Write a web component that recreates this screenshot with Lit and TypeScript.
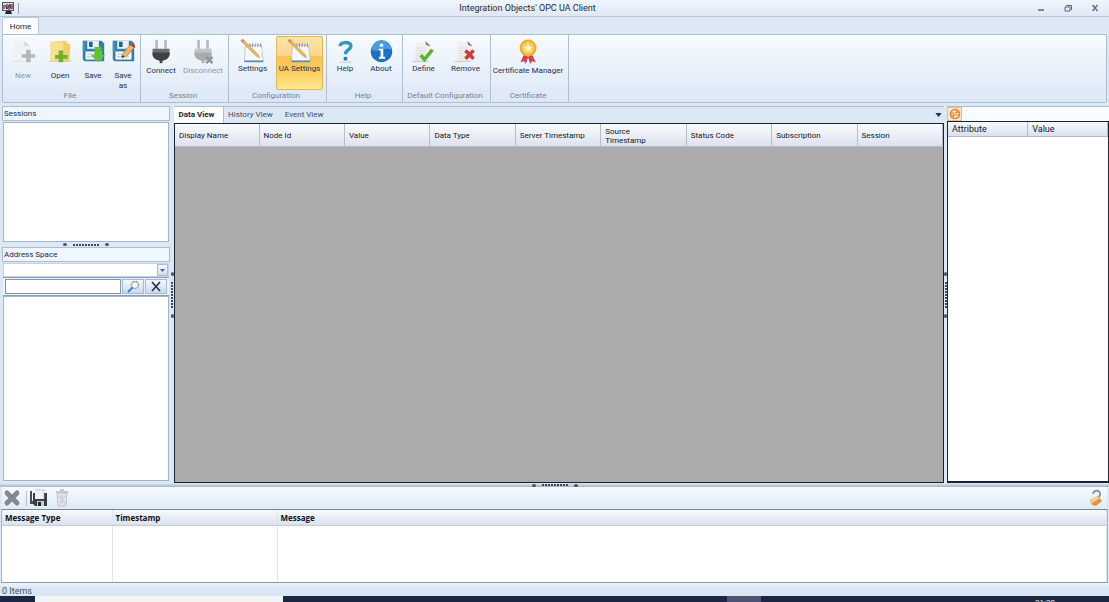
import { LitElement, html, css, svg, nothing } from "lit";
import { customElement, property } from "lit/decorators.js";
import { classMap } from "lit/directives/class-map.js";

const floppy = svg`
  <path d="M2 2h21l3 3v20H4l-2-2z" fill="#2f7fa8"/>
  <path d="M2 2h3v12H2z" fill="#3f93bb"/>
  <rect x="7" y="2" width="13" height="9" fill="#e9f1f5"/>
  <rect x="9" y="3" width="4" height="6" fill="#27607f"/>
  <rect x="5" y="14" width="18" height="9" fill="#f7f9fa"/>
  <path d="M7 17h13M7 20h13" stroke="#a9b4bb"/>`;

const notepad = svg`
  <path d="M6 7h18l2 18H5z" fill="#fdfdfd" stroke="#b4c0cc"/>
  <path d="M5 24h21v2H5z" fill="#5e8bb0"/>
  <path d="M6 22l2-11h16l1 11z" fill="#f4f6f8"/>
  <path d="M11 5v4M14 5v4M17 5v4M20 5v4M23 5v4" stroke="#7f8b96"/>
  <path d="M1 2l2-2 17 17 2 4-4-2z" fill="#efb85a" stroke="#b98a45" stroke-width=".6"/>
  <path d="M1 2l2-2 2 2-2 2z" fill="#c98f6a"/>`;

const sheet = svg`
  <path d="M5 3h12l5 5v17H3z" fill="#f1f1ef"/>
  <path d="M16 2l6 6-5-1z" fill="#7b8086"/>
  <path d="M6 10h11M6 13h11M6 16h10M5 19h9M5 22h9" stroke="#d6d8d9"/>
  <path d="M2 25h18" stroke="#b9bdc0"/>`;

const plug = (dark: string, mid: string) => svg`
  <rect x="7" y="1" width="3" height="10" fill="#b9bcbf"/>
  <rect x="17" y="1" width="3" height="10" fill="#b9bcbf"/>
  <path d="M4 11h19v6c0 4-4 6-7 7h-5c-3-1-7-3-7-7z" fill="${mid}"/>
  <path d="M4 15h19v2c0 4-4 6-7 7h-5c-3-1-7-3-7-7z" fill="${dark}"/>
  <rect x="12" y="23" width="3" height="4" fill="${dark}"/>`;

const icons: Record<string, unknown> = {
  create: svg`
    <path d="M3 2h12l6 6v17H3z" fill="#f1f2f3"/>
    <path d="M15 2l6 6h-6z" fill="#d4d7da"/>
    <path d="M1 25h20" stroke="#d9dcdf"/>
    <path d="M17 12h5v5h5v4h-5v5h-5v-5h-5v-4h5z" fill="#b3b6b9"/>`,
  open: svg`
    <path d="M3 3l17-1 2 3 3 1-1 19H3z" fill="#f1cd6b"/>
    <path d="M3 3l14 1 1 21H3z" fill="#f8df91"/>
    <path d="M1 25h25" stroke="#d8cba6"/>
    <path d="M12 13h5v5h5v4h-5v4h-5v-4H8v-4h4z" fill="#6bb42c"/>`,
  save: svg`${floppy}<path d="M15 9h8v9h4l-8 8-8-8h4z" fill="#62c12f"/>`,
  saveAs: svg`${floppy}
    <path d="M12 20l3-6L23 5l4 3-8 10-6 3z" fill="#f2b65e" stroke="#a9752f" stroke-width=".7"/>
    <path d="M20 6h6l1 4z" fill="#a8372c"/><path d="M12 21l1-3 2 2z" fill="#222"/>`,
  connect: plug("#3f4143", "#6d7073"),
  disconnect: svg`${plug("#a9acaf", "#c2c4c7")}
    <path d="M17 20l7 7M24 20l-7 7" stroke="#909498" stroke-width="3"/>`,
  settings: notepad,
  help: svg`
    <path d="M8 8c0-5 12-6 12 0 0 4-6 4-6 9" fill="none" stroke="#2f9cc4" stroke-width="4"/>
    <rect x="12" y="20" width="4" height="4" fill="#2580ad"/>
    <path d="M7 26h14" stroke="#c3ccd3"/>`,
  about: svg`
    <circle cx="14" cy="14" r="12" fill="#1b72c4"/>
    <path d="M3 12a11 11 0 0 1 22 0c-7-4-15 4-22 0z" fill="#4a9be0"/>
    <circle cx="14" cy="7" r="2" fill="#fff"/>
    <path d="M11 11h5v9h2v2h-7v-2h2v-7h-2z" fill="#fff"/>`,
  define: svg`${sheet}<path d="M11 18l4 5 9-11" fill="none" stroke="#58b530" stroke-width="4"/>`,
  remove: svg`${sheet}<path d="M14 13l9 9M23 13l-9 9" stroke="#cf3a35" stroke-width="4"/>`,
  certificate: svg`
    <path d="M9 17l-4 9 4-1 2 3 3-9zM18 17l4 9-4-1-2 3-3-9z" fill="#d6404e"/>
    <circle cx="13.500" cy="10" r="9.500" fill="#f2ae2e"/>
    <circle cx="13.500" cy="10" r="7" fill="#f9cf5a"/>
    <path d="M13.500 5l1.500 3.500 3.500.3-2.700 2.300.9 3.600-3.200-2-3.200 2 .9-3.600-2.700-2.300 3.500-.3z" fill="#fff6d5"/>`,
};

interface Command { label: string; icon: string; disabled?: boolean; active?: boolean; width: number }
interface Group { title: string; size?: string; commands: Command[] }

const groups: Group[] = [
  { title: "File", size: "tall", commands: [
    { label: "New", icon: "create", disabled: true, width: 40 },
    { label: "Open", icon: "open", width: 34 },
    { label: "Save", icon: "save", width: 32 },
    { label: "Save as", icon: "saveAs", width: 28 }] },
  { title: "Session", size: "medium", commands: [
    { label: "Connect", icon: "connect", width: 40 },
    { label: "Disconnect", icon: "disconnect", disabled: true, width: 44 }] },
  { title: "Configuration", commands: [
    { label: "Settings", icon: "settings", width: 47 },
    { label: "UA Settings", icon: "settings", active: true, width: 47 }] },
  { title: "Help", commands: [
    { label: "Help", icon: "help", width: 36 },
    { label: "About", icon: "about", width: 36 }] },
  { title: "Default Configuration", commands: [
    { label: "Define", icon: "define", width: 41 },
    { label: "Remove", icon: "remove", width: 43 }] },
  { title: "Certificate", size: "medium", commands: [
    { label: "Certificate Manager", icon: "certificate", width: 74 }] },
];

@customElement("ribbon-button")
class RibbonButton extends LitElement {
  @property({ attribute: false }) command!: Command;
  @property() size = "";

  static styles = css`
    button {
      display: flex; flex-direction: column; align-items: center;
      box-sizing: border-box; width: 100%; height: 54px; padding: 2px 0 0;
      border: 1px solid transparent; border-radius: 2px; background: none;
      font: 8px/10px "Roboto", "Liberation Sans", sans-serif; color: #1d3157;
    }
    button:disabled { color: #8d98a8; }
    .active {
      border-color: #e3b64f;
      background: linear-gradient(#fce3ac 0%, #fbd68d 36%, #f9c354 37%, #fbcb5c 65%, #fee98f 100%);
    }
    svg { width: 25px; height: 25px; flex: none; }
    span { white-space: nowrap; }
    .medium span { margin-top: 2px; }
    .tall span { margin-top: 7px; white-space: normal; width: 20px; text-align: center; }
  `;

  render() {
    const c = this.command;
    return html`<button class=${classMap({ active: !!c.active, tall: this.size === "tall", medium: this.size === "medium" })} ?disabled=${!!c.disabled}>
      <svg viewBox="0 0 28 28" aria-hidden="true">${icons[c.icon]}</svg>
      <span>${c.label}</span>
    </button>`;
  }
}

@customElement("split-grip")
class SplitGrip extends LitElement {
  @property({ type: Boolean, reflect: true }) vertical = false;
  static styles = css`
    :host { display: flex; align-items: center; justify-content: center; gap: 6px; overflow: hidden; }
    :host([vertical]) { flex-direction: column; }
    i { width: 4px; height: 3px; border-radius: 2px; background: #4d5a6e; }
    b { width: 26px; height: 2px; background: repeating-linear-gradient(90deg, #3f4a5c 0 2px, transparent 2px 3px); }
    :host([vertical]) b { width: 2px; height: 26px; background: repeating-linear-gradient(#3f4a5c 0 2px, transparent 2px 3px); }
    :host([vertical]) i { height: 4px; width: 3px; }
  `;
  render() { return html`<i></i><b></b><i></i>`; }
}

@customElement("app-root")
class AppRoot extends LitElement {
  static styles = css`
    :host {
      --ui: "Roboto", "Liberation Sans", sans-serif;
      --segoe: "Open Sans", "Noto Sans", sans-serif;
      --line: #a3b4c9;
      display: flex; flex-direction: column; height: 100vh; overflow: hidden;
      background: #dde8f5; color: #1a2a48; font: 8px/12px var(--ui);
    }
    * { box-sizing: border-box; }
    button, input, select { font: inherit; color: inherit; margin: 0; }
    h1, h2 { margin: 0; font: inherit; }
    table { border-collapse: collapse; table-layout: fixed; width: 100%; }
    th { text-align: left; font-weight: normal; }

    .title { display: flex; align-items: center; height: 17px; flex: none;
      background: linear-gradient(#f0f5fd, #dfe8f4); border-bottom: 1px solid #b4c4d5; }
    .title h1 { flex: 1; text-align: center; font: 9px/14px var(--ui); color: #222b38; }
    .side { display: flex; align-items: center; width: 82px; }
    .side.left { gap: 4px; padding-left: 2px; width: 28px; }
    .side.left::after { content: ""; width: 1px; height: 11px; background: #8c9bb0; }
    .app { width: 12px; height: 12px; }
    .win { width: 27px; height: 14px; padding: 0; border: 0; background: none; display: grid; place-items: center; }
    .win svg { width: 8px; height: 8px; }

    .tabs { display: flex; align-items: flex-end; height: 17px; flex: none; padding-left: 2px; }
    .tabs button { height: 17px; width: 37px; padding: 2px 0 0; background: #fbfdff;
      border: 1px solid #b7c7dc; border-bottom: 0; border-radius: 2px 2px 0 0; }
    .ribbon { display: flex; flex: none; margin: 0 2px; height: 69px;
      border: 1px solid #aebed2; border-radius: 0 0 2px 2px; background: linear-gradient(#f8fbff, #e9f1fb 50%, #dce7f5); }
    .group { display: flex; flex-direction: column; padding: 1px 3px 0 0; border-right: 1px solid #aebed2; }
    .commands { display: flex; }
    .group h2 { text-align: center; color: #74839b; line-height: 12px; }

    .work { display: grid; grid-template-columns: 168px 4px minmax(0, 1fr) 3px 162px; flex: 1; min-height: 0;
      margin: 3px 0 0 2px; }
    .side-panel { display: flex; flex-direction: column; min-height: 0; }
    .caption { flex: none; height: 15px; padding-left: 1px; border: 1px solid #a9bcd4; background: #f0f6fe; line-height: 13px; }
    .box { background: #fff; border: 1px solid var(--line); margin: 1px 1px 0; }
    .sessions { height: 120px; flex: none; }
    .side-panel split-grip { height: 5px; flex: none; }
    .combo { display: flex; margin: 1px 1px 0; height: 14px; flex: none; position: relative; }
    .combo select { appearance: none; flex: 1; border: 1px solid #c5d3e5; background: #fff; }
    .drop { position: absolute; right: 1px; top: 1px; width: 11px; height: 12px; pointer-events: none;
      border: 1px solid #a9bdd8; background: linear-gradient(#f4f8fe, #cfdcee); }
    .search { display: flex; gap: 1px; margin: 0 1px; padding: 1px 2px; height: 19px; flex: none;
      border: 1px solid #8d9db3; border-width: 1px 0; background: #edf3fb; }
    .search input { flex: 1; min-width: 0; border: 1px solid #8296b3; background: #fff; padding: 0 3px; }
    .search button { width: 22px; padding: 0; border: 1px solid #a5b9d5; background: linear-gradient(#f4f8fe, #cbd9ed); display: grid; place-items: center; }
    .search svg { width: 14px; height: 13px; }
    .tree { flex: 1; margin: 0 1px 2px; }

    .center { display: flex; flex-direction: column; min-height: 0; }
    .views { display: flex; align-items: stretch; height: 17px; flex: none; border-top: 1px solid #aebed2; }
    .views button { border: 0; padding: 0 4px; background: none; color: #3a4e72; }
    .views .on { background: #fff; color: #16263f; font-weight: bold; width: 50px; border-right: 1px solid #aebed2; padding: 0 4px 0 0; }
    .views .event { margin-left: 4px; }
    .views .more { margin-left: auto; padding: 0 2px; display: grid; place-items: center; }
    .grid { flex: 1; background: #ababab; border: 1px solid #1b2233; min-height: 0; }
    .grid th { height: 22px; padding: 2px 0 0 4px; line-height: 9px; color: #14181f; vertical-align: middle;
      background: linear-gradient(#f9fafd, #dce2ee); border-right: 1px solid #b3bdcb; border-bottom: 1px solid #b3bdcb; }
    .grid th:first-child { width: 84px; }
    .grid .narrow span { display: block; width: 50px; }

    .attrs { display: flex; flex-direction: column; border-top: 1px solid #aebed2; }
    .attrs .bar { height: 14px; flex: none; background: #f8fbff; display: flex; }
    .bar button { width: 15px; height: 14px; padding: 0; border: 1px solid #e5bd92; background: #fde6cd; display: grid; place-items: center; }
    .bar svg { width: 12px; height: 12px; }
    .attr-list { flex: 1; background: #fff; border: 1px solid #1b2233; border-width: 1px 1px 2px; }
    .attr-list th { height: 14px; padding: 0 4px; font-size: 9px; color: #14181f;
      background: linear-gradient(#f6f9fe, #d9e0ed); border-right: 1px solid #b3bdcb; border-bottom: 1px solid #b3bdcb; }

    .hsplit { height: 4px; flex: none; background: linear-gradient(#e3ebf5, #a6b4c6); }
    .tools { display: flex; align-items: center; height: 22px; flex: none; margin: 0 2px;
      background: linear-gradient(#f6fbff, #dfebf8); }
    .tools button { width: 20px; height: 20px; padding: 0; border: 0; background: none; display: grid; place-items: center; }
    .tools svg { width: 18px; height: 18px; }
    .tools i { width: 1px; height: 15px; background: #b6c3d3; margin: 0 1px 0 4px; }
    .tools .trash { margin-left: 4px; }
    .tools .lock { margin: 0 1px 0 auto; }
    .log { flex: none; height: 74px; margin: 0 1px; background: #fff; border: 1px solid #76869b; border-color: #76869b #a3b4c9 #8a98ab; display: flex; }
    .log th { height: 15px; padding: 1px 4px 0 3px; font: bold 8px/13px var(--segoe); color: #111;
      background: linear-gradient(#f6f9fe, #dbe0ec); border-bottom: 1px solid #c3ccda; }
    .log td { padding: 0; }
    .log tr > * { border-right: 1px solid #dfe5ee; }
    .status { flex: none; height: 13px; padding: 2px 2px 0; font-size: 9px; color: #44506a; background: linear-gradient(#eef4fc, #d9e6f4 40%); }
    .taskbar { display: flex; flex: none; height: 6px; background: #1a2642; overflow: hidden; }
    .taskbar .find { width: 248px; margin-left: 35px; background: #f2f3f5; }
    .taskbar .running { width: 34px; margin-left: 444px; background: #4b5570; }
    .taskbar time { margin: 2px 54px 0 auto; line-height: 10px; color: #e8ecf4; }
  `;

  private refresh = svg`<circle cx="6" cy="6" r="4.500" fill="none" stroke="#e8862b" stroke-width="1.600"/>
    <path d="M2 5h6M4 7h6" stroke="#e8862b" stroke-width="1.200"/><path d="M7 2l3 3H7zM5 10L2 7h3z" fill="#e8862b"/>`;

  render() {
    const columns = ["Display Name", "Node Id", "Value", "Data Type", "Server Timestamp", "Source Timestamp", "Status Code", "Subscription", "Session"];
    return html`
      <header class="title">
        <div class="side left">
          <svg class="app" viewBox="0 0 12 12" aria-hidden="true">
            <rect width="12" height="9" fill="#4b5672"/><rect x="1" y="1" width="10" height="7" fill="#d8dfe9"/>
            <path d="M2 7V3M5 7V2M7 8V3M10 7V2" stroke="#a6423a" stroke-width="1.500"/>
            <path d="M3 3l2 4 3-5 1 5" fill="none" stroke="#27335a"/><path d="M4 9h5l1 3H3z" fill="#26272c"/>
          </svg>
        </div>
        <h1>Integration Objects' OPC UA Client</h1>
        <div class="side">
          <button class="win" aria-label="Minimize"><svg viewBox="0 0 8 8"><path d="M1 6h6" stroke="#5b6778" stroke-width="1.500"/></svg></button>
          <button class="win" aria-label="Restore"><svg viewBox="0 0 8 8"><path d="M1 3h5v4H1zM2 1.500h5.500V6" fill="none" stroke="#5b6778"/></svg></button>
          <button class="win" aria-label="Close"><svg viewBox="0 0 8 8"><path d="M1.500 1l5 6M6.500 1l-5 6" stroke="#6b7787" stroke-width="1.600"/></svg></button>
        </div>
      </header>
      <nav class="tabs"><button>Home</button></nav>
      <section class="ribbon">
        ${groups.map((g) => html`<div class="group">
          <div class="commands">${g.commands.map((c) => html`<ribbon-button style="width:${c.width}px" .command=${c} size=${g.size ?? ""}></ribbon-button>`)}</div>
          <h2>${g.title}</h2>
        </div>`)}
      </section>
      <main class="work">
        <aside class="side-panel">
          <h2 class="caption">Sessions</h2>
          <div class="box sessions"></div>
          <split-grip></split-grip>
          <h2 class="caption">Address Space</h2>
          <div class="combo">
            <select aria-label="Address space"></select>
            <svg class="drop" viewBox="0 0 9 10" aria-hidden="true"><path d="M2 4h5L4.500 7z" fill="#52678a"/></svg>
          </div>
          <div class="search">
            <input type="text" aria-label="Search nodes">
            <button aria-label="Search"><svg viewBox="0 0 14 13">
              <circle cx="9" cy="5" r="3.500" fill="#f3f6fa" stroke="#8d96a3"/><path d="M6.500 7.500L2 12" stroke="#4a82bd" stroke-width="2.200"/>
              <path d="M7 1l1 1M11 1l-1 1M13 4h-1" stroke="#c0853b"/></svg></button>
            <button aria-label="Clear"><svg viewBox="0 0 14 13"><path d="M3 2l8 9M11 2l-8 9" stroke="#27303f" stroke-width="1.600"/></svg></button>
          </div>
          <div class="box tree"></div>
        </aside>
        <split-grip vertical></split-grip>
        <section class="center">
          <div class="views">
            <button class="on">Data View</button><button>History View</button><button class="event">Event View</button>
            <button class="more" aria-label="More views"><svg width="7" height="4" viewBox="0 0 8 5"><path d="M0 0h8L4 5z" fill="#1f355c"/></svg></button>
          </div>
          <div class="grid"><table><thead><tr>
            ${columns.map((c) => html`<th class=${c === "Source Timestamp" ? "narrow" : nothing}><span>${c}</span></th>`)}
          </tr></thead></table></div>
        </section>
        <split-grip vertical></split-grip>
        <aside class="attrs">
          <div class="bar"><button aria-label="Refresh"><svg viewBox="0 0 12 12">${this.refresh}</svg></button></div>
          <div class="attr-list"><table><thead><tr><th>Attribute</th><th>Value</th></tr></thead></table></div>
        </aside>
      </main>
      <split-grip class="hsplit"></split-grip>
      <div class="tools">
        <button aria-label="Delete"><svg viewBox="0 0 18 18"><path d="M4 4l10 10M14 4L4 14" stroke="#85898c" stroke-width="5" stroke-linecap="round"/></svg></button>
        <i></i>
        <button aria-label="Save log"><svg viewBox="0 0 18 18"><path d="M1 2h2v10h3v3H1z" fill="#4a4e53"/><path d="M4 4h14v13H6l-2-2z" fill="#3a3e43"/><path d="M6 1h9v9H6z" fill="#eef1f4"/><path d="M6 1h9v9" fill="none" stroke="#a9afb6" stroke-width=".6"/><path d="M8 12h7v5H8z" fill="#c9cfd6"/><path d="M9 13h3v4H9z" fill="#22252a"/></svg></button>
        <button class="trash" aria-label="Clear log"><svg viewBox="0 0 18 18"><path d="M4 4h10l-1 13H5z" fill="#e3e6e9" stroke="#bcc1c6"/><path d="M3 3h12M7 1h4" stroke="#b7bcc2" stroke-width="1.500"/><path d="M6 7l6 7M12 7l-6 7M9 6v9" stroke="#c1c6cb"/></svg></button>
        <button class="lock" aria-label="Lock"><svg viewBox="0 0 18 18"><path d="M6 5C7 0 14 1 13 6l-1 2" fill="none" stroke="#8b929b" stroke-width="1.800"/><path d="M3 11l8-4 4 5-6 5-4-1z" fill="#e0953f"/><path d="M3 11l8-4 1 3-7 4z" fill="#f8cf90"/></svg></button>
      </div>
      <div class="log"><table>
        <colgroup><col style="width:110px"><col style="width:165px"><col></colgroup>
        <thead><tr><th>Message Type</th><th>Timestamp</th><th>Message</th></tr></thead>
        <tbody><tr><td></td><td></td><td></td></tr></tbody>
      </table></div>
      <footer class="status">0 Items</footer>
      <div class="taskbar"><div class="find"></div><div class="running"></div><time>21:20</time></div>
    `;
  }
}
